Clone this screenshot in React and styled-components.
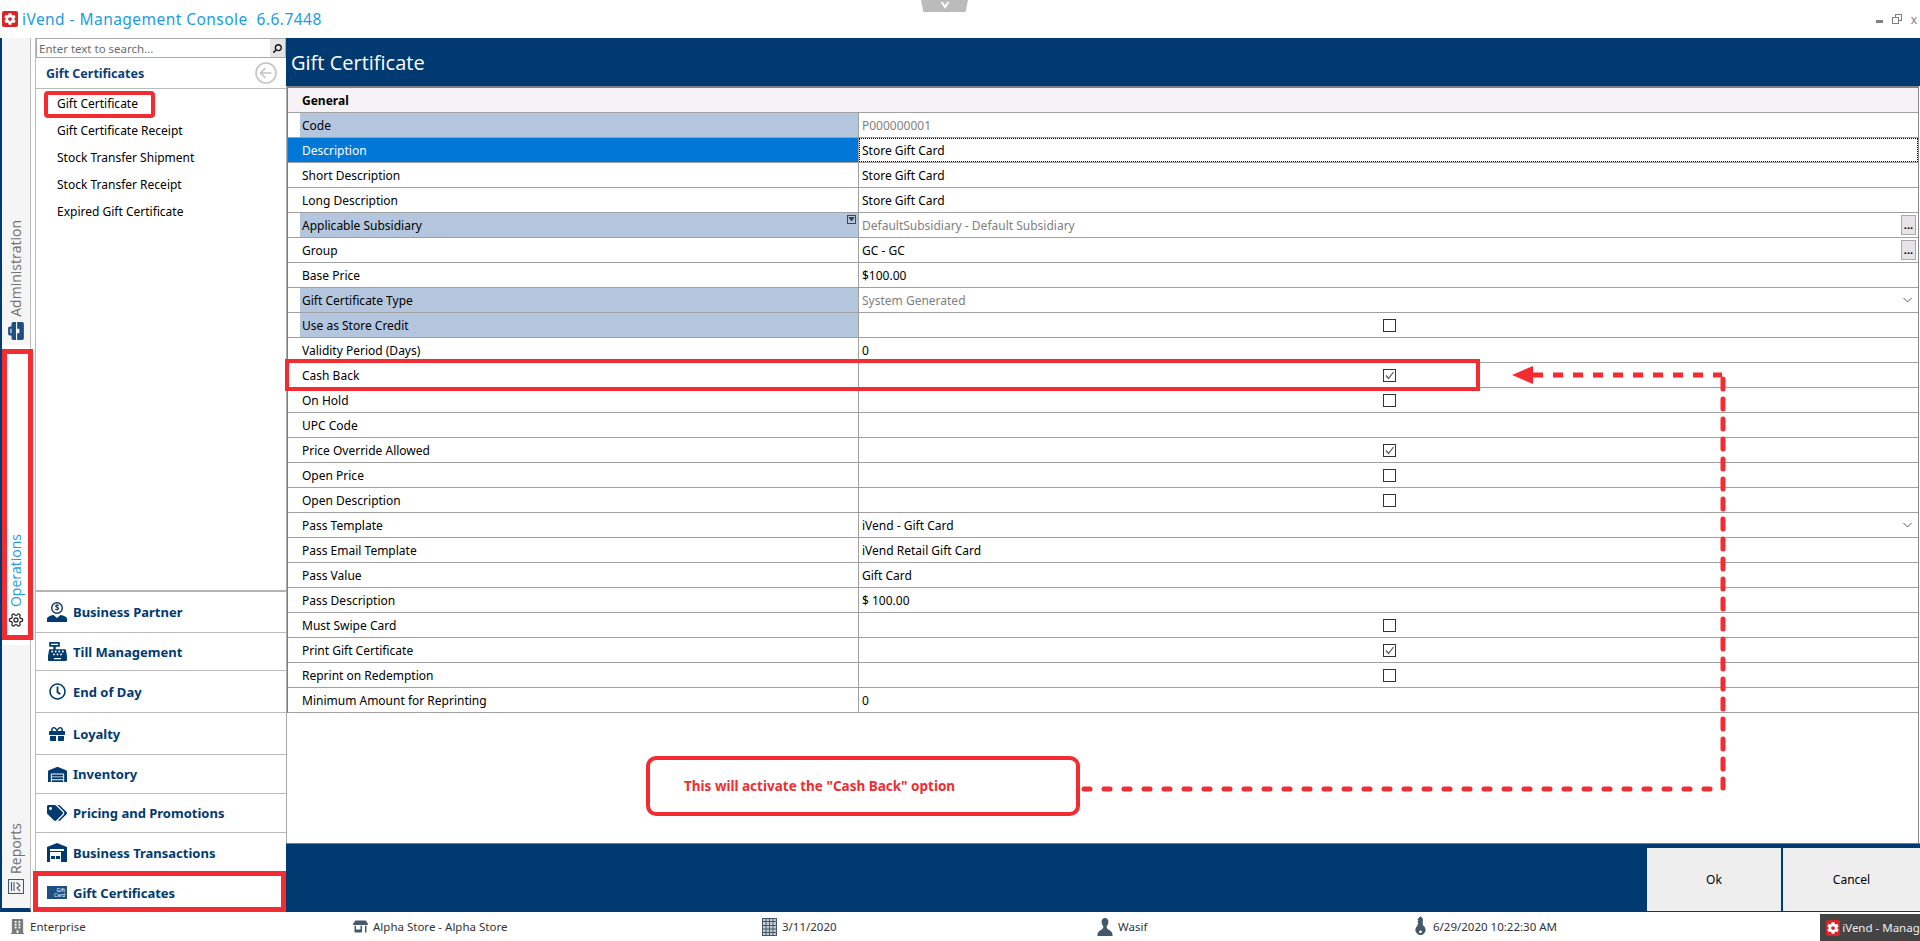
import styled, { createGlobalStyle } from "styled-components"
import { FaBriefcase, FaBuilding, FaCashRegister, FaCog, FaGift, FaKey, FaRegClock, FaSearch, FaStoreAlt, FaTags, FaWarehouse } from "react-icons/fa"
import { LuSettings } from "react-icons/lu"

const NAVY = "#003a70"
const RED = "#f22c30"
const UI_FONT = `"Noto Sans", "DejaVu Sans", sans-serif`

const GlobalStyle = createGlobalStyle`
    html, body {
        margin: 0;
        padding: 0;
        background: #fff;
    }
    * {
        box-sizing: border-box;
    }
`

const Page = styled.div`
    position: relative;
    display: flex;
    flex-direction: column;
    width: 1920px;
    height: 941px;
    overflow: hidden;
    font-family: ${UI_FONT};
    font-size: 12px;
    color: #000;
    background: #fff;
`

const TitleBar = styled.header`
    position: relative;
    display: flex;
    align-items: center;
    height: 38px;
    padding-left: 2px;
    flex-shrink: 0;
`

const Logo = styled.span`
    display: flex;
    align-items: center;
    justify-content: center;
    width: 16px;
    height: 16px;
    border-radius: 2px;
    background: #d9252a;
    color: #fff;
    font-size: 12px;
`

const AppTitle = styled.span`
    margin-left: 4px;
    font-size: 15.5px;
    letter-spacing: 0.45px;
    white-space: pre;
    color: #1c9ce2;
`

const PullTab = styled.div`
    position: absolute;
    left: 921px;
    top: 0;
    display: flex;
    justify-content: center;
    width: 47px;
    height: 12px;
    background: #bbb;
    clip-path: polygon(0 0, 100% 0, 95% 100%, 5% 100%);
`

const WindowControls = styled.div`
    display: flex;
    align-items: center;
    gap: 9px;
    margin-left: auto;
    padding-right: 3px;
    color: #808080;
`

const Body = styled.div`
    display: flex;
    flex: 1;
    min-height: 0;
`

const Rail = styled.nav`
    display: flex;
    flex-direction: column;
    width: 31px;
    flex-shrink: 0;
    margin-right: 4px;
    border-left: 2px solid ${NAVY};
    border-right: 1px solid #bbb;
    border-bottom: 4px solid ${NAVY};
    background: #f5f5f5;
`

const RailTab = styled.div`
    display: flex;
    flex-direction: column;
    justify-content: flex-end;
    align-items: center;
    gap: 5px;
    height: ${(p) => p.$height}px;
    padding-bottom: ${(p) => p.$bottom}px;
    background: ${(p) => (p.$active ? "#fff" : "transparent")};
    color: ${(p) => (p.$active ? "#1c9ce2" : "#6f6f6f")};
`

const RailLabel = styled.span`
    writing-mode: vertical-rl;
    transform: rotate(180deg);
    font-family: "Open Sans", sans-serif;
    font-size: 14px;
    line-height: 16px;
`

const Nav = styled.aside`
    display: flex;
    flex-direction: column;
    width: 251px;
    flex-shrink: 0;
    border-left: 1px solid #bbb;
    background: #fff;
`

const SearchBar = styled.div`
    display: flex;
    align-items: center;
    height: 20px;
    border: 1px solid #aaa;
    color: #6b6b6b;
    font-size: 11.5px;
`

const SearchText = styled.span`
    flex: 1;
    padding-left: 2px;
`

const SearchButton = styled.span`
    display: flex;
    align-items: center;
    justify-content: center;
    width: 15px;
    height: 18px;
    background: #e4e4e4;
    color: #111;
    font-size: 9px;
`

const NavHeading = styled.div`
    display: flex;
    align-items: center;
    justify-content: space-between;
    height: 31px;
    padding: 0 9px 0 10px;
    border-bottom: 1px solid #bbb;
    font-size: 12.5px;
    font-weight: 700;
    color: #0b3f77;
`

const NavList = styled.ul`
    flex: 1;
    list-style: none;
    margin: 0;
    padding: 1px 0 0 21px;
`

const NavItem = styled.li`
    height: 27px;
    line-height: 27px;
`

const NavGroup = styled.div`
    display: flex;
    align-items: center;
    height: ${(p) => p.$height}px;
    padding-left: 11px;
    border-top: ${(p) => (p.$first ? "2px solid #b4b4b4" : "1px solid #bbb")};
    font-size: 13px;
    font-weight: 700;
    color: ${NAVY};
`

const NavIcon = styled.span`
    display: flex;
    align-items: center;
    justify-content: center;
    width: 20px;
    height: 20px;
    margin-right: 6px;
    font-size: ${(p) => p.$size || 18}px;
    flex-shrink: 0;
`

const GiftCardIcon = styled.span`
    display: flex;
    flex-direction: column;
    align-items: flex-end;
    justify-content: center;
    width: 20px;
    height: 13px;
    padding-right: 2px;
    background: #1f4f80;
    color: #fff;
    font-size: 5px;
    font-weight: 400;
    line-height: 5px;
`

const Main = styled.main`
    display: flex;
    flex-direction: column;
    flex: 1;
    min-width: 0;
`

const MainHeader = styled.div`
    display: flex;
    align-items: center;
    height: 48px;
    padding-left: 5px;
    flex-shrink: 0;
    background: ${NAVY};
    color: #fff;
    font-family: "Open Sans", sans-serif;
    font-size: 20px;
`

const Content = styled.div`
    flex: 1;
    min-height: 0;
    border-left: 1px solid #aaa;
    padding-right: 1px;
    background: #fff;
`

const ContentInner = styled.div`
    height: 100%;
    border-right: 1px solid #888;
`

const Grid = styled.div`
    border-top: 2px solid #808080;
    border-left: 1px solid #808080;
`

const GeneralRow = styled.div`
    display: flex;
    align-items: center;
    height: 25px;
    padding-left: 14px;
    border-bottom: 1px solid #a0a0a0;
    background: #f6f2f6;
    font-weight: 700;
`

const Row = styled.div`
    display: grid;
    grid-template-columns: 571px 1fr;
    height: 25px;
    border-bottom: 1px solid #a0a0a0;
`

const Label = styled.div`
    position: relative;
    display: flex;
    align-items: center;
    padding-left: ${(p) => (p.$tone === "locked" ? 2 : 14)}px;
    margin-left: ${(p) => (p.$tone === "locked" ? 12 : 0)}px;
    border-right: 1px solid #a0a0a0;
    background: ${(p) => (p.$tone === "locked" ? "#b3c6de" : p.$tone === "selected" ? "#0078d7" : "#fff")};
    color: ${(p) => (p.$tone === "selected" ? "#fff" : "#000")};
`

const FilterMark = styled.svg`
    position: absolute;
    right: 2px;
    top: 2px;
    width: 9px;
    height: 9px;
`

const Value = styled.div`
    display: flex;
    align-items: center;
    justify-content: ${(p) => (p.$center ? "center" : "space-between")};
    padding: 0 2px 0 3px;
    color: ${(p) => (p.$muted ? "#808080" : "#000")};
    outline: ${(p) => (p.$focus ? "1px dotted #000" : "none")};
    outline-offset: -1px;
`

const EllipsisButton = styled.span`
    display: flex;
    align-items: center;
    justify-content: center;
    width: 15px;
    height: 20px;
    border: 1px solid #aaa;
    background: #e6e3e6;
    color: #000;
    font-weight: 700;
    font-size: 11px;
    line-height: 12px;
`

const CheckBox = styled.span`
    display: flex;
    align-items: center;
    justify-content: center;
    width: 13px;
    height: 13px;
    border: 1px solid #333;
    background: #fff;
`

const Footer = styled.div`
    display: flex;
    justify-content: flex-end;
    gap: 2px;
    height: 69px;
    padding: 4px 0 1px;
    flex-shrink: 0;
    border-top: 1px solid #5c7ea3;
    background: ${NAVY};
`

const FooterButton = styled.button`
    width: ${(p) => p.$width}px;
    border: none;
    background: #eee;
    font: inherit;
    color: #000;
`

const StatusBar = styled.footer`
    display: grid;
    grid-template-columns: 343px 409px 336px 315px 408px 1fr;
    align-items: center;
    height: 29px;
    padding-left: 9px;
    flex-shrink: 0;
    color: #333;
    font-size: 11.5px;
`

const StatusItem = styled.span`
    display: flex;
    align-items: center;
    gap: 5px;
    white-space: nowrap;
`

const StatusIcon = styled.span`
    display: flex;
    align-items: center;
    justify-content: center;
    width: 16px;
    height: 18px;
    color: ${(p) => p.$color || "#44586c"};
    font-size: 15px;
`

const TaskButton = styled.span`
    display: flex;
    align-items: center;
    gap: 2px;
    justify-self: end;
    width: 109px;
    height: 27px;
    margin-top: 2px;
    padding-left: 6px;
    background: #444;
    color: #eee;
    font-size: 11.5px;
    white-space: nowrap;
`

const AnnotationBox = styled.div`
    position: absolute;
    left: ${(p) => p.$x}px;
    top: ${(p) => p.$y}px;
    width: ${(p) => p.$w}px;
    height: ${(p) => p.$h}px;
    border: ${(p) => p.$line || 5}px solid ${RED};
    border-radius: ${(p) => p.$radius || 0}px;
    pointer-events: none;
`

const Callout = styled(AnnotationBox)`
    display: flex;
    align-items: center;
    padding-left: 34px;
    background: #fff;
    color: ${RED};
    font-size: 13.5px;
    font-weight: 700;
`

const Arrows = styled.svg`
    position: absolute;
    left: 0;
    top: 0;
    width: 1920px;
    height: 941px;
    pointer-events: none;
`

const rows = [
    { label: "Code", value: "P000000001", tone: "locked", muted: true },
    { label: "Description", value: "Store Gift Card", tone: "selected", focus: true },
    { label: "Short Description", value: "Store Gift Card" },
    { label: "Long Description", value: "Store Gift Card" },
    { label: "Applicable Subsidiary", value: "DefaultSubsidiary - Default Subsidiary", tone: "locked", muted: true, filter: true, more: true },
    { label: "Group", value: "GC - GC", more: true },
    { label: "Base Price", value: "$100.00" },
    { label: "Gift Certificate Type", value: "System Generated", tone: "locked", muted: true, drop: true },
    { label: "Use as Store Credit", check: "off", tone: "locked" },
    { label: "Validity Period (Days)", value: "0" },
    { label: "Cash Back", check: "on" },
    { label: "On Hold", check: "off" },
    { label: "UPC Code", value: "" },
    { label: "Price Override Allowed", check: "on" },
    { label: "Open Price", check: "off" },
    { label: "Open Description", check: "off" },
    { label: "Pass Template", value: "iVend - Gift Card", drop: true },
    { label: "Pass Email Template", value: "iVend Retail Gift Card" },
    { label: "Pass Value", value: "Gift Card" },
    { label: "Pass Description", value: "$ 100.00" },
    { label: "Must Swipe Card", check: "off" },
    { label: "Print Gift Certificate", check: "on" },
    { label: "Reprint on Redemption", check: "off" },
    { label: "Minimum Amount for Reprinting", value: "0" },
]

const navLinks = ["Gift Certificate", "Gift Certificate Receipt", "Stock Transfer Shipment", "Stock Transfer Receipt", "Expired Gift Certificate"]

function PartnerGlyph() {
    return (
        <svg width="20" height="20" viewBox="0 0 20 20" fill="currentColor">
            <path fillRule="evenodd" d="M10 0a6 6 0 1 1 0 12a6 6 0 0 1 0-12zm0 1.4a4.6 4.6 0 1 0 0 9.2a4.6 4.6 0 0 0 0-9.2z" />
            <text x="10" y="9" fontSize="8" fontWeight="700" textAnchor="middle" fontFamily="Noto Sans">$</text>
            <path d="M0 20v-3c0-2 3-3.500 6.500-4l3.500 3l3.500-3c3.500.5 6.500 2 6.500 4v3z" />
        </svg>
    )
}

function DepotGlyph() {
    return (
        <svg width="20" height="19" viewBox="0 0 20 19" fill="currentColor">
            <path d="M10 0L20 4v15H0V4z" />
            <rect x="3" y="6" width="14" height="2" fill="#fff" />
            <rect x="3" y="9" width="11" height="10" fill="#fff" />
            <rect x="4" y="13" width="4" height="3" />
            <rect x="9" y="13" width="4" height="3" />
            <text x="16.500" y="18" fontSize="8" fontWeight="700" textAnchor="middle" fontFamily="Noto Sans">$</text>
        </svg>
    )
}

function CalendarGlyph() {
    return (
        <svg width="15" height="18" viewBox="0 0 15 18" fill="none" stroke="currentColor">
            <rect x="0.500" y="0.500" width="14" height="17" fill="#c6ccd3" />
            <path d="M0 3.500h15M0 7.500h15M0 11h15M0 14.500h15M4 0v18M7.500 0v18M11 0v18" />
        </svg>
    )
}

function PersonGlyph() {
    return (
        <svg width="16" height="18" viewBox="0 0 16 18" fill="currentColor">
            <path d="M8 0c2.200 0 3.400 1.800 3.400 3.800c0 2-.9 3.600-1.700 4.600c-.3 1.800 1.300 3 3.300 4.200c1.600 1 2.600 2.700 2.600 5.400H.4c0-2.700 1-4.400 2.600-5.400c2-1.200 3.600-2.400 3.300-4.200C5.500 7.400 4.600 5.800 4.600 3.800C4.600 1.800 5.800 0 8 0z" />
        </svg>
    )
}

function ReportsGlyph() {
    return (
        <svg width="16" height="15" viewBox="0 0 16 15" fill="none" stroke="#44586c" strokeWidth="1.100">
            <rect x="0.500" y="0.500" width="15" height="14" />
            <path d="M3.500 3v9M6 3v9M8.500 3.500l3.500 3l-3 2.500l3 3M13 3v0" />
        </svg>
    )
}

function BackGlyph() {
    return (
        <svg width="22" height="22" viewBox="0 0 22 22" fill="none" stroke="#c4c4c4" strokeWidth="1.600">
            <circle cx="11" cy="11" r="10" />
            <path d="M16.500 11H6M10.500 6L5.500 11l5 5" />
        </svg>
    )
}

function Tick() {
    return (
        <svg width="9" height="9" viewBox="0 0 9 9" fill="none" stroke="#555" strokeWidth="1.200">
            <path d="M1 4.500L3.500 7.500L8.500 1" />
        </svg>
    )
}

function RowValue({ row }) {
    if (row.check) {
        return (
            <Value $center>
                <CheckBox>{row.check === "on" && <Tick />}</CheckBox>
            </Value>
        )
    }
    return (
        <Value $muted={row.muted} $focus={row.focus}>
            <span>{row.value}</span>
            {row.more && <EllipsisButton>...</EllipsisButton>}
            {row.drop && (
                <svg width="9" height="6" viewBox="0 0 9 6" fill="none" stroke="#555" style={{ marginRight: 4 }}>
                    <path d="M0.500 1L4.500 5L8.500 1" />
                </svg>
            )}
        </Value>
    )
}

function App() {
    return (
        <Page>
            <GlobalStyle />
            <TitleBar>
                <Logo><FaCog /></Logo>
                <AppTitle>iVend - Management Console  6.6.7448</AppTitle>
                <PullTab>
                    <svg width="10" height="9" viewBox="0 0 10 9" fill="none" stroke="#fff" strokeWidth="2">
                        <path d="M1.500 2L5 7L8.500 2" />
                    </svg>
                </PullTab>
                <WindowControls>
                    <svg width="7" height="3" viewBox="0 0 7 3" fill="#808080" style={{ marginTop: 5 }}><rect width="7" height="3" /></svg>
                    <svg width="10" height="10" viewBox="0 0 10 10" fill="#fff" stroke="#808080">
                        <rect x="3.500" y="0.500" width="6" height="6" />
                        <rect x="0.500" y="3.500" width="6" height="6" />
                    </svg>
                    <span>x</span>
                </WindowControls>
            </TitleBar>

            <Body>
                <Rail>
                    <RailTab $height={307} $bottom={5}>
                        <RailLabel>Administration</RailLabel>
                        <FaBriefcase size={18} color="#1f4f80" style={{ transform: "rotate(-90deg)" }} />
                    </RailTab>
                    <RailTab $height={300} $active $bottom={17}>
                        <RailLabel>Operations</RailLabel>
                        <LuSettings size={16} color="#333" style={{ transform: "rotate(-90deg)" }} />
                    </RailTab>
                    <RailTab style={{ flex: 1 }} $bottom={14}>
                        <RailLabel>Reports</RailLabel>
                        <ReportsGlyph />
                    </RailTab>
                </Rail>

                <Nav>
                    <SearchBar>
                        <SearchText>Enter text to search...</SearchText>
                        <SearchButton><FaSearch style={{ transform: "scaleX(-1)" }} /></SearchButton>
                    </SearchBar>
                    <NavHeading>
                        Gift Certificates
                        <BackGlyph />
                    </NavHeading>
                    <NavList>
                        {navLinks.map((link) => (
                            <NavItem key={link}>{link}</NavItem>
                        ))}
                    </NavList>
                    <NavGroup $first $height={42}><NavIcon><PartnerGlyph /></NavIcon>Business Partner</NavGroup>
                    <NavGroup $height={38}><NavIcon $size={19}><FaCashRegister /></NavIcon>Till Management</NavGroup>
                    <NavGroup $height={42}><NavIcon $size={17}><FaRegClock /></NavIcon>End of Day</NavGroup>
                    <NavGroup $height={42}><NavIcon $size={16}><FaGift /></NavIcon>Loyalty</NavGroup>
                    <NavGroup $height={39}><NavIcon $size={19}><FaWarehouse /></NavIcon>Inventory</NavGroup>
                    <NavGroup $height={39}><NavIcon $size={20}><FaTags /></NavIcon>Pricing and Promotions</NavGroup>
                    <NavGroup $height={40}><NavIcon><DepotGlyph /></NavIcon>Business Transactions</NavGroup>
                    <NavGroup $height={40}>
                        <NavIcon>
                            <GiftCardIcon><span>Gift</span><span>Card</span></GiftCardIcon>
                        </NavIcon>
                        Gift Certificates
                    </NavGroup>
                </Nav>

                <Main>
                    <MainHeader>Gift Certificate</MainHeader>
                    <Content>
                        <ContentInner>
                            <Grid>
                                <GeneralRow>General</GeneralRow>
                                {rows.map((row) => (
                                    <Row key={row.label}>
                                        <Label $tone={row.tone}>
                                            {row.label}
                                            {row.filter && (
                                                <FilterMark viewBox="0 0 9 9" fill="none" stroke="#444">
                                                    <rect x="0.500" y="0.500" width="8" height="8" />
                                                    <path d="M2 2.500h5L4.500 6z" fill="#444" />
                                                </FilterMark>
                                            )}
                                        </Label>
                                        <RowValue row={row} />
                                    </Row>
                                ))}
                            </Grid>
                        </ContentInner>
                    </Content>
                    <Footer>
                        <FooterButton $width={134}>Ok</FooterButton>
                        <FooterButton $width={137}>Cancel</FooterButton>
                    </Footer>
                </Main>
            </Body>

            <StatusBar>
                <StatusItem><StatusIcon $color="#7b7b7b"><FaBuilding /></StatusIcon>Enterprise</StatusItem>
                <StatusItem><StatusIcon><FaStoreAlt /></StatusIcon>Alpha Store - Alpha Store</StatusItem>
                <StatusItem><StatusIcon><CalendarGlyph /></StatusIcon>3/11/2020</StatusItem>
                <StatusItem><StatusIcon><PersonGlyph /></StatusIcon>Wasif</StatusItem>
                <StatusItem><StatusIcon><FaKey style={{ transform: "rotate(135deg)" }} /></StatusIcon>6/29/2020 10:22:30 AM</StatusItem>
                <TaskButton><Logo><FaCog /></Logo>iVend - Manag...</TaskButton>
            </StatusBar>

            {/* red marks drawn over the screenshot */}
            <AnnotationBox $x={44} $y={91} $w={111} $h={27} $line={4} $radius={4} />
            <AnnotationBox $x={2} $y={349} $w={31} $h={291} />
            <AnnotationBox $x={33} $y={871} $w={253} $h={41} />
            <AnnotationBox $x={285} $y={359} $w={1195} $h={32} $line={4} />
            <Callout $x={646} $y={756} $w={434} $h={60} $line={4} $radius={10}>
                This will activate the "Cash Back" option
            </Callout>
            <Arrows viewBox="0 0 1920 941">
                <path d="M1512 375L1533 366V384Z" fill={RED} />
                <path d="M1533 375H1722" stroke={RED} strokeWidth="5" strokeDasharray="10 10" fill="none" />
                <path d="M1723 379V788" stroke={RED} strokeWidth="5" strokeDasharray="10 10" strokeLinecap="round" fill="none" />
                <path d="M1084 789H1722" stroke={RED} strokeWidth="5" strokeDasharray="6 14" strokeLinecap="round" fill="none" />
            </Arrows>
        </Page>
    )
}

export default App
